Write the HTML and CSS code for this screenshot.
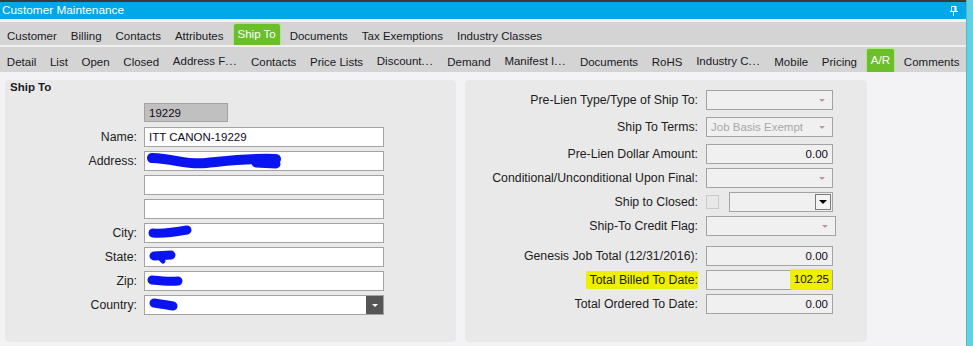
FILE: index.html
```html
<!DOCTYPE html>
<html lang="en">
<head>
    <meta charset="UTF-8">
    <title>Customer Maintenance</title>
    <link rel="stylesheet" href="styles.css">
</head>
<body>
    <div class="window">
        <div class="top-strip"></div>
        <div class="title-bar">
            <span>Customer Maintenance</span>
            <svg class="pin" width="8" height="10" viewBox="0 0 8 10">
                <path d="M1.5 0.5h4v5h-4z" fill="none" stroke="#fff"/>
                <rect x="4.5" y="0" width="2" height="6" fill="#fff"/>
                <rect x="0" y="5" width="8" height="1" fill="#fff"/>
                <rect x="3" y="6" width="1" height="4" fill="#fff"/>
            </svg>
        </div>
        <div class="tab-bar tab-bar-main">
            <span class="tab">Customer</span>
            <span class="tab">Billing</span>
            <span class="tab">Contacts</span>
            <span class="tab">Attributes</span>
            <span class="tab active">Ship To</span>
            <span class="tab">Documents</span>
            <span class="tab">Tax Exemptions</span>
            <span class="tab">Industry Classes</span>
        </div>
        <div class="tab-bar tab-bar-sub">
            <span class="tab">Detail</span>
            <span class="tab">List</span>
            <span class="tab">Open</span>
            <span class="tab">Closed</span>
            <span class="tab tab-short">Address F<span class="dots">...</span></span>
            <span class="tab">Contacts</span>
            <span class="tab">Price Lists</span>
            <span class="tab tab-short">Discount<span class="dots">...</span></span>
            <span class="tab">Demand</span>
            <span class="tab tab-short">Manifest I<span class="dots">...</span></span>
            <span class="tab">Documents</span>
            <span class="tab">RoHS</span>
            <span class="tab tab-short">Industry C<span class="dots">...</span></span>
            <span class="tab">Mobile</span>
            <span class="tab">Pricing</span>
            <span class="tab active">A/R</span>
            <span class="tab">Comments</span>
        </div>

        <div class="content">
            <section class="panel panel-left">
                <h2 class="panel-title">Ship To</h2>
                <div class="form-grid">
                    <span></span>
                    <div class="field field-id">19229</div>

                    <label>Name:</label>
                    <div class="field">ITT CANON-19229</div>

                    <label>Address:</label>
                    <div class="field">
                        <svg class="scribble" width="140" height="20" viewBox="0 0 140 20">
                            <path d="M6 7 C30 8 40 14 60 12 S100 7 130 8" fill="none" stroke="#0a14f0" stroke-width="10" stroke-linecap="round"/>
                            <path d="M110 12 L130 13" fill="none" stroke="#0a14f0" stroke-width="9" stroke-linecap="round"/>
                        </svg>
                    </div>

                    <span></span>
                    <div class="field"></div>

                    <span></span>
                    <div class="field"></div>

                    <label>City:</label>
                    <div class="field">
                        <svg class="scribble" width="50" height="20" viewBox="0 0 50 20">
                            <path d="M7 10 C20 11 30 9 41 7" fill="none" stroke="#0a14f0" stroke-width="9" stroke-linecap="round"/>
                        </svg>
                    </div>

                    <label>State:</label>
                    <div class="field">
                        <svg class="scribble" width="40" height="20" viewBox="0 0 40 20">
                            <path d="M8 9 L25 8" fill="none" stroke="#0a14f0" stroke-width="9" stroke-linecap="round"/>
                            <path d="M15 12 L17 14" fill="none" stroke="#0a14f0" stroke-width="5" stroke-linecap="round"/>
                        </svg>
                    </div>

                    <label>Zip:</label>
                    <div class="field">
                        <svg class="scribble" width="40" height="20" viewBox="0 0 40 20">
                            <path d="M6 9 C15 10 25 11 32 10" fill="none" stroke="#0a14f0" stroke-width="9" stroke-linecap="round"/>
                        </svg>
                    </div>

                    <label>Country:</label>
                    <div class="field field-select">
                        <svg class="scribble" width="40" height="20" viewBox="0 0 40 20">
                            <path d="M8 8 C15 9 22 10 27 11" fill="none" stroke="#0a14f0" stroke-width="9" stroke-linecap="round"/>
                        </svg>
                        <span class="select-button"><i class="arrow-white"></i></span>
                    </div>
                </div>
            </section>

            <section class="panel panel-right">
                <div class="row">
                    <label>Pre-Lien Type/Type of Ship To:</label>
                    <div class="field field-gray"><i class="arrow-muted"></i></div>
                </div>
                <div class="row row-spaced">
                    <label>Ship To Terms:</label>
                    <div class="field field-gray"><span class="placeholder">Job Basis Exempt</span><i class="arrow-muted"></i></div>
                </div>
                <div class="row row-spaced">
                    <label>Pre-Lien Dollar Amount:</label>
                    <div class="field field-gray field-num">0.00</div>
                </div>
                <div class="row">
                    <label>Conditional/Unconditional Upon Final:</label>
                    <div class="field field-gray"><i class="arrow-muted"></i></div>
                </div>
                <div class="row">
                    <label>Ship to Closed:</label>
                    <div class="closed-controls">
                        <span class="checkbox"></span>
                        <div class="field field-gray combo">
                            <span class="combo-button"><i class="arrow-black"></i></span>
                        </div>
                    </div>
                </div>
                <div class="row">
                    <label>Ship-To Credit Flag:</label>
                    <div class="field field-gray field-wide"><i class="arrow-muted"></i></div>
                </div>
                <div class="row row-group">
                    <label>Genesis Job Total (12/31/2016):</label>
                    <div class="field field-gray field-num">0.00</div>
                </div>
                <div class="row">
                    <label><mark class="marker">Total Billed To Date:</mark></label>
                    <div class="field field-gray field-num"><mark class="marker marker-num">102.25</mark></div>
                </div>
                <div class="row">
                    <label>Total Ordered To Date:</label>
                    <div class="field field-gray field-num">0.00</div>
                </div>
            </section>
        </div>
    </div>
    <div class="edge"></div>
</body>
</html>
```

FILE: styles.css
```css
body {
    margin: 0;
    display: flex;
    height: 346px;
    overflow: hidden;
    font-family: "Liberation Sans", Arial, sans-serif;
    font-size: 11.5px;
    color: #1a1a24;
}

.window {
    width: 966px;
    display: flex;
    flex-direction: column;
    background-color: #f3f3f5;
}

.edge {
    flex: 1;
    background-color: #62d2e2;
    border-left: 1px solid #4fb8cc;
}

.top-strip {
    height: 2px;
    background-color: #3a3a3a;
}

.title-bar {
    height: 17px;
    background-color: #00a8e8;
    color: #ffffff;
    display: flex;
    align-items: center;
    justify-content: space-between;
    padding: 0 8px 0 2px;
    border-bottom: 3px solid #f2f2f2;
    font-size: 11.8px;
}

.title-bar span {
    line-height: 17px;
}

.pin {
    display: block;
    margin-top: 1px;
}

.tab-bar {
    display: flex;
    background-color: #d4d4d4;
    align-items: flex-start;
}

.tab-bar-main {
    height: 23px;
    border-bottom: 2px solid #f0f0f0;
}

.tab-bar-sub {
    height: 25px;
}

.tab {
    padding: 7px 7px 0;
    line-height: 14px;
    white-space: nowrap;
}

.tab-bar-sub .tab {
    padding: 8px 6.85px 0;
}

.tab-bar-sub .tab-short {
    padding-top: 7px;
}

.dots {
    letter-spacing: 0.8px;
}

.tab.active {
    background-color: #6abf2b;
    color: #ffffff;
    border: 1px solid #b4e48a;
    border-bottom: none;
    border-radius: 3px 3px 0 0;
    margin: 1px 2px 0;
    padding: 3px 4px 0;
    align-self: stretch;
}

.tab-bar-sub .tab.active {
    margin: 1px 2px 0;
    padding: 4px 4px 0;
}

.content {
    flex: 1;
    display: flex;
    align-items: flex-start;
    padding: 8px 0 0 5px;
    gap: 9px;
}

.panel {
    background-color: #e9e9e9;
    border-radius: 4px;
    height: 262px;
    box-sizing: border-box;
}

.panel-left {
    width: 451px;
}

.panel-title {
    margin: 0 0 9px 5px;
    font-size: 11.5px;
    font-weight: bold;
    line-height: 14px;
}

.form-grid {
    display: grid;
    grid-template-columns: 132px 240px;
    grid-auto-rows: 20px;
    column-gap: 7px;
    row-gap: 4px;
}

.form-grid label,
.row label {
    font-size: 12.3px;
    color: #1c1c22;
}

.form-grid label {
    text-align: right;
    line-height: 20px;
}

.field {
    position: relative;
    box-sizing: border-box;
    height: 20px;
    border: 1px solid #a3a3a3;
    background-color: #ffffff;
    padding: 0 4px;
    line-height: 18px;
    color: #120822;
    display: flex;
    align-items: center;
}

.field-id {
    width: 84px;
    background-color: #c0c0c0;
    margin-bottom: 1px;
    height: 19px;
}

.scribble {
    display: block;
    margin-left: -3px;
}

.field-select {
    padding-right: 0;
    justify-content: space-between;
}

.select-button {
    width: 17px;
    height: 18px;
    background-color: #555555;
    display: flex;
    align-items: center;
    justify-content: center;
}

.arrow-white {
    border-left: 3px solid transparent;
    border-right: 3px solid transparent;
    border-top: 3px solid #ffffff;
}

.panel-right {
    width: 402px;
    padding-top: 10px;
    display: flex;
    flex-direction: column;
    gap: 4px;
}

.row {
    display: flex;
    align-items: center;
    height: 20px;
    gap: 8px;
}

.row-spaced {
    margin-top: 3px;
}

.row-group {
    margin-top: 6px;
}

.row label {
    width: 233px;
    text-align: right;
}

.field-gray {
    width: 127px;
    background-color: #f0f0f0;
    justify-content: space-between;
}

.field-wide {
    width: 130px;
}

.field-num {
    justify-content: flex-end;
}

.placeholder {
    color: #a8a8a8;
}

.arrow-muted {
    margin-left: auto;
    margin-right: 3px;
    border-left: 3px solid transparent;
    border-right: 3px solid transparent;
    border-top: 3px solid #b59aac;
}

.closed-controls {
    display: flex;
    align-items: center;
    gap: 10px;
}

.checkbox {
    width: 11px;
    height: 12px;
    border: 1px solid #c9c9c9;
    background-color: #e8e8e8;
}

.combo {
    width: 104px;
    padding: 0;
    justify-content: flex-end;
}

.combo-button {
    width: 16px;
    height: 16px;
    margin-right: 1px;
    border: 1px solid #7a7a7a;
    box-sizing: border-box;
    background-color: #f4f4f4;
    display: flex;
    align-items: center;
    justify-content: center;
}

.arrow-black {
    border-left: 4px solid transparent;
    border-right: 4px solid transparent;
    border-top: 4px solid #000000;
}

.marker {
    background-color: #eef000;
    color: inherit;
    padding: 2px 0 2px 4px;
    border-radius: 2px;
}

.marker-num {
    padding: 1px 3px 2px 4px;
    margin-right: -4px;
    margin-top: -2px;
}
```
